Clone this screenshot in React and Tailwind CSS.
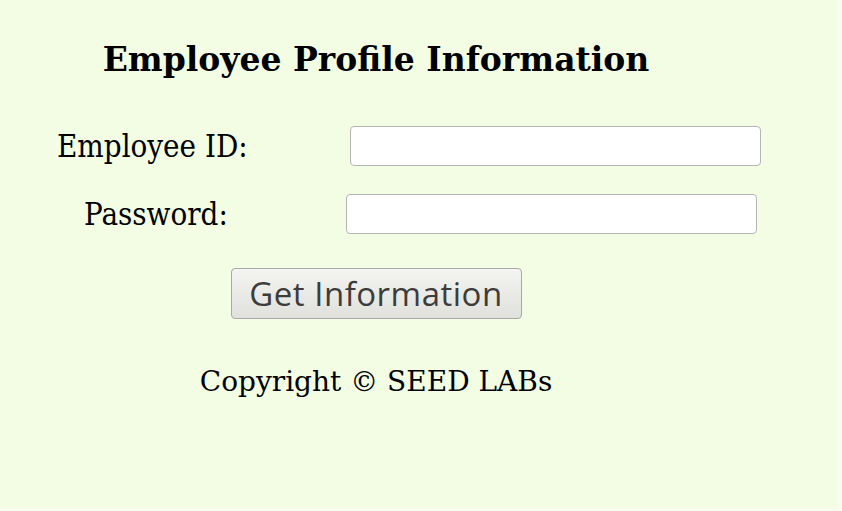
import React from 'react';

export default function App() {
  return (
    <div className="w-[842px] h-[511px] bg-[#f8fdef] overflow-hidden">
      <div className="w-[838px] h-[508px] bg-[#f3fde4] text-black font-['DejaVu_Serif',serif]">
        <div className="w-[752px] flex flex-col items-center pt-[36px]">
          <h2 className="text-[33px] font-bold leading-[48px]">Employee Profile Information</h2>
        </div>

        <div className="mt-[42px] flex items-center h-[40px]">
          <label className="ml-[57px] w-[293px] text-[31px] font-['DejaVu_Serif_Condensed','DejaVu_Serif',serif]">Employee ID:</label>
          <input type="text" className="w-[411px] h-[40px] bg-white border border-[#b5b5b5] rounded-[4px]" />
        </div>

        <div className="mt-[28px] flex items-center h-[40px]">
          <label className="ml-[84px] w-[262px] text-[31px] font-['DejaVu_Serif_Condensed','DejaVu_Serif',serif]">Password:</label>
          <input type="password" className="w-[411px] h-[40px] bg-white border border-[#b5b5b5] rounded-[4px]" />
        </div>

        <div className="w-[752px] flex flex-col items-center">
          <button className="mt-[34px] w-[291px] h-[51px] rounded-[4px] border border-[#a8a8a8] bg-gradient-to-b from-[#f4f4f2] to-[#e0e0dc] text-[#3c3c3c] text-[33px] tracking-[0.5px] leading-none font-['Open_Sans',sans-serif]">
            Get Information
          </button>
          <p className="mt-[46px] text-[28px] leading-[34px]">Copyright © SEED LABs</p>
        </div>
      </div>
    </div>
  );
}
